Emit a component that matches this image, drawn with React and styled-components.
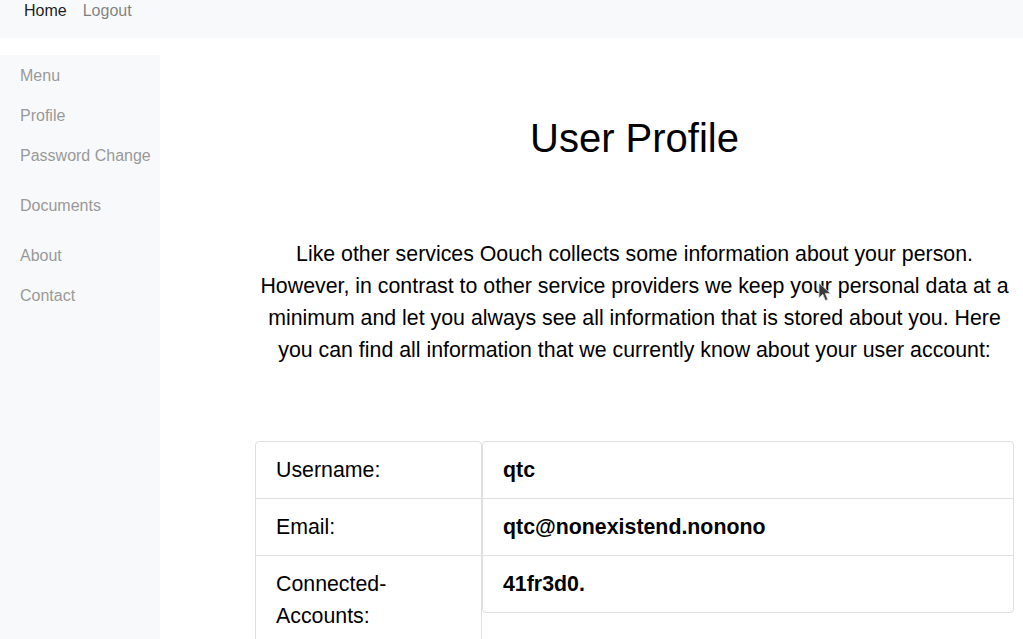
import React from 'react';
import styled, { createGlobalStyle } from 'styled-components';

const Global = createGlobalStyle`
  html, body {
    margin: 0;
    padding: 0;
    background: #fff;
    font-family: "Liberation Sans", Arial, sans-serif;
    color: #000;
  }
`;

const Page = styled.div`
  position: relative;
  height: 639px;
  overflow: hidden;
`;

const TopNav = styled.nav`
  display: flex;
  background: #f8f9fa;
  height: 38px;
  padding: 0 16px;
  box-sizing: border-box;
`;

const NavLink = styled.a`
  padding: 0 8px;
  font-size: 16px;
  line-height: 22px;
  color: ${({ active }) => (active ? 'rgba(0,0,0,0.9)' : 'rgba(0,0,0,0.5)')};
  text-decoration: none;
`;

const Body = styled.div`
  display: flex;
  margin-top: 17px;
  height: calc(639px - 55px);
`;

const Sidebar = styled.aside`
  width: 160px;
  flex-shrink: 0;
  padding-top: 1px;
  background: #f8f9fa;
`;

const MenuGroup = styled.div`
  margin-bottom: 10px;
`;

const MenuItem = styled.a`
  display: block;
  padding: 8px 20px;
  font-size: 16px;
  line-height: 24px;
  color: #999;
  white-space: nowrap;
  text-decoration: none;
`;

const Main = styled.main`
  flex: 1;
  padding: 0 9px 0 95px;
  text-align: center;
`;

const Title = styled.h1`
  margin: 59px 0 0;
  font-size: 40px;
  line-height: 48px;
  font-weight: 400;
`;

const Intro = styled.p`
  margin: 76px 0 0;
  font-size: 21.33px;
  line-height: 32px;
`;

const InfoGrid = styled.div`
  display: grid;
  grid-template-columns: 227px 532px;
  align-items: start;
  margin-top: 75px;
  text-align: left;
`;

const List = styled.ul`
  list-style: none;
  margin: 0;
  padding: 0;
  border: 1px solid #dfdfdf;
  border-radius: 4px;
  overflow: hidden;
`;

const Item = styled.li`
  padding: 12px 20px;
  font-size: 21.33px;
  line-height: 32px;
  font-weight: ${({ bold }) => (bold ? 700 : 400)};
  & + & {
    border-top: 1px solid #dfdfdf;
  }
`;

const Cursor = styled.svg`
  position: absolute;
  left: 818px;
  top: 282px;
`;

const labels = ['Username:', 'Email:', 'Connected-Accounts:'];
const values = ['qtc', 'qtc@nonexistend.nonono', '41fr3d0.'];

export default function App() {
  return (
    <Page>
      <Global />
      <TopNav>
        <NavLink active>Home</NavLink>
        <NavLink>Logout</NavLink>
      </TopNav>
      <Body>
        <Sidebar>
          <MenuGroup>
            <MenuItem>Menu</MenuItem>
            <MenuItem>Profile</MenuItem>
            <MenuItem>Password Change</MenuItem>
          </MenuGroup>
          <MenuGroup>
            <MenuItem>Documents</MenuItem>
          </MenuGroup>
          <MenuGroup>
            <MenuItem>About</MenuItem>
            <MenuItem>Contact</MenuItem>
          </MenuGroup>
        </Sidebar>
        <Main>
          <Title>User Profile</Title>
          <Intro>
            Like other services Oouch collects some information about your person. However, in
            contrast to other service providers we keep your personal data at a minimum and let
            you always see all information that is stored about you. Here you can find all
            information that we currently know about your user account:
          </Intro>
          <InfoGrid>
            <List>
              {labels.map((l) => (
                <Item key={l}>{l}</Item>
              ))}
            </List>
            <List>
              {values.map((v) => (
                <Item key={v} bold>
                  {v}
                </Item>
              ))}
            </List>
          </InfoGrid>
        </Main>
      </Body>
      <Cursor width="15" height="21" viewBox="0 0 15 21">
        <path d="M1 1 L1 16 L4.8 12.3 L7.4 18.5 L9.8 17.5 L7.3 11.4 L12.5 11.4 Z" fill="#3a3a3a" stroke="#ddd" strokeWidth="0.8" />
      </Cursor>
    </Page>
  );
}
